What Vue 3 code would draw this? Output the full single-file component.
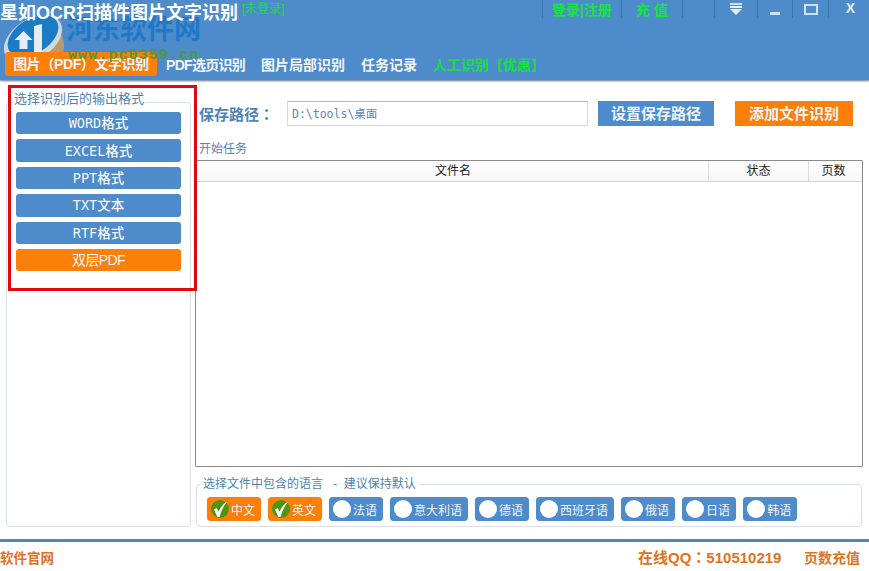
<template>
  <div class="app">
    <header class="top">
      <div class="title-row">
        <div class="title">星如OCR扫描件图片文字识别</div>
        <div class="no-login">[未登录]</div>
        <div class="ctrls">
          <div class="ctrl c-login">登录|注册</div>
          <div class="ctrl c-pay">充 值</div>
          <div class="ctrl c-blank"></div>
          <div class="ctrl c-skin">
            <svg width="14" height="14" viewBox="0 0 14 14">
              <rect x="1" y="1" width="12" height="2" fill="#cfe0f2" />
              <rect x="1" y="4" width="12" height="2" fill="#e6eef8" />
              <path d="M1 7h12l-6 6z" fill="#e6eef8" />
            </svg>
          </div>
          <div class="ctrl c-min">
            <svg width="12" height="14" viewBox="0 0 12 14"><rect x="1" y="10" width="10" height="3" fill="#cfe0f2" /></svg>
          </div>
          <div class="ctrl c-max">
            <svg width="14" height="14" viewBox="0 0 14 14"><rect x="1" y="3" width="12" height="9" fill="none" stroke="#cfe0f2" stroke-width="2" /></svg>
          </div>
          <div class="ctrl c-close">X</div>
        </div>
      </div>
      <nav class="nav">
        <div class="nav-item active">图片（PDF）文字识别</div>
        <div class="nav-item tight">PDF选页识别</div>
        <div class="nav-item">图片局部识别</div>
        <div class="nav-item">任务记录</div>
        <div class="nav-item green">人工识别【优惠】</div>
      </nav>

      <!-- site watermark over the header -->
      <svg class="wm-logo" width="70" height="70" viewBox="0 0 70 70">
        <ellipse cx="40" cy="36" rx="24" ry="25" fill="#e9a04a" opacity="0.7" />
        <ellipse cx="33" cy="29" rx="32" ry="20" transform="rotate(-32 33 29)" fill="#d5e0ea" opacity="0.9" />
        <ellipse cx="33" cy="26" rx="28" ry="17" transform="rotate(-32 33 26)" fill="#1c7bc5" />
        <path d="M23.5 21l9 9h-5v9h-8v-9h-5z" fill="#e4edf5" />
        <path d="M34 16l8-2v31l-8 4z" fill="#e4edf5" />
      </svg>
      <div class="wm-name">河东软件网</div>
      <div class="wm-url">www.pc0359.cn</div>
    </header>

    <main class="body">
      <aside class="side">
        <fieldset class="box format-box">
          <legend>选择识别后的输出格式</legend>
          <button v-for="f in formats" :key="f.name" class="fmt" :class="{ on: f.on }">{{ f.name }}</button>
        </fieldset>
      </aside>

      <section class="work">
        <div class="path-row">
          <label class="path-label">保存路径<span class="mid-colon">：</span></label>
          <div class="path-input">D:\tools\桌面</div>
          <button class="btn blue">设置保存路径</button>
          <button class="btn orange">添加文件识别</button>
        </div>
        <div class="start">开始任务</div>
        <div class="grid">
          <div class="grid-head">
            <div class="col col-name">文件名</div>
            <div class="col col-state">状态</div>
            <div class="col col-pages">页数</div>
          </div>
        </div>
        <fieldset class="box lang-box">
          <legend>选择文件中包含的语言 &nbsp;&nbsp;- &nbsp;建议保持默认</legend>
          <div class="langs">
            <div v-for="l in langs" :key="l.name" class="lang" :class="{ on: l.on }">
              <span class="dot">
                <svg v-if="l.on" width="16" height="17" viewBox="0 0 16 17">
                  <path d="M2 8.5l2.6-1.4 2 3.4C8.5 6.5 11 3 15 .8 11.5 5 9 10 7.6 16H5.4z" fill="#fff" />
                </svg>
              </span>
              <span>{{ l.name }}</span>
            </div>
          </div>
        </fieldset>
      </section>
    </main>

    <footer class="foot">
      <div class="site">软件官网</div>
      <div class="qq">在线QQ<span class="mid-colon">：</span>510510219</div>
      <div class="pay">页数充值</div>
    </footer>

    <!-- red annotation frame -->
    <div class="mark"></div>
  </div>
</template>

<script setup>
const formats = [
  { name: 'WORD格式' },
  { name: 'EXCEL格式' },
  { name: 'PPT格式' },
  { name: 'TXT文本' },
  { name: 'RTF格式' },
  { name: '双层PDF', on: true }
]

const langs = [
  { name: '中文', on: true },
  { name: '英文', on: true },
  { name: '法语' },
  { name: '意大利语' },
  { name: '德语' },
  { name: '西班牙语' },
  { name: '俄语' },
  { name: '日语' },
  { name: '韩语' }
]
</script>

<style>
html, body {
  margin: 0;
  background: #fff;
}
</style>

<style scoped>
.app {
  position: relative;
  width: 869px;
  height: 571px;
  overflow: hidden;
  display: flex;
  flex-direction: column;
  background: #fff;
  font-family: "Liberation Sans", "Noto Sans CJK SC", sans-serif;
}

.top {
  position: relative;
  height: 80px;
  flex: none;
  background: #4e8bca;
  box-shadow: 0 1px 2px #5b7390;
}

.title-row {
  display: flex;
  height: 44px;
}

.title {
  position: relative;
  z-index: 1;
  font-size: 18px;
  font-weight: 700;
  color: #fff;
  line-height: 27px;
  white-space: nowrap;
  width: 242px;
  flex: none;
}

.no-login {
  font-size: 12px;
  color: #10e040;
  line-height: 19px;
}

.ctrls {
  position: absolute;
  top: 0;
  left: 542px;
  display: flex;
  height: 18px;
}

.ctrl {
  box-sizing: border-box;
  height: 18px;
  border-left: 1px solid #3f74ab;
  display: flex;
  justify-content: center;
  align-items: center;
  font-weight: 700;
  font-size: 14px;
  color: #12e83c;
}

.c-login { width: 79px; }
.c-pay { width: 61px; }
.c-blank { width: 32px; }
.c-skin { width: 43px; }
.c-min { width: 35px; }
.c-max { width: 36px; }
.c-close { width: 41px; color: #e8f0f8; padding: 0 0 2px 3px; }

.nav {
  position: relative;
  z-index: 1;
  display: flex;
  align-items: center;
  height: 24px;
  margin-top: 8px;
  padding-left: 5px;
}

.nav-item {
  font-size: 14px;
  font-weight: 700;
  color: #f0f5fb;
  white-space: nowrap;
  margin-right: 16px;
  padding-bottom: 1px;
}

.nav-item.tight {
  letter-spacing: -0.7px;
}

.nav-item.active {
  box-sizing: border-box;
  background: #fb7f08;
  border-radius: 3px;
  height: 24px;
  line-height: 24px;
  width: 152px;
  text-align: center;
  letter-spacing: -0.4px;
  margin-right: 9px;
}

.nav-item.green {
  color: #14e23c;
}

.wm-logo {
  position: absolute;
  left: 0;
  top: 10px;
}

.wm-name {
  position: absolute;
  left: 66px;
  top: 15px;
  font-size: 27px;
  font-weight: 700;
  line-height: 30px;
  color: #1a78c8;
  opacity: 0.9;
  white-space: nowrap;
}

.wm-url {
  position: absolute;
  z-index: 2;
  left: 68px;
  top: 47px;
  font-size: 15px;
  font-weight: 700;
  letter-spacing: 1.1px;
  line-height: 18px;
  color: #4a9a30;
  opacity: 0.9;
  white-space: nowrap;
  font-family: "Liberation Mono", monospace;
}

.body {
  flex: none;
  height: 459px;
  display: flex;
}

.box {
  box-sizing: border-box;
  margin: 0;
  border: 1px solid #d9dfe5;
  border-radius: 4px;
  background: #fff;
}

.box legend {
  font-size: 12px;
  color: #4f7fb3;
  padding: 0 1px;
  line-height: 14px;
  white-space: nowrap;
}

.side {
  width: 196px;
  flex: none;
  padding: 12px 0 0 6px;
  box-sizing: border-box;
}

.format-box {
  width: 185px;
  height: 435px;
  padding: 0 8px 0 9px;
  display: flex;
  flex-direction: column;
}

.box.format-box legend {
  font-size: 13px;
  margin-left: -3px;
  padding-bottom: 6px;
}

.fmt {
  display: block;
  width: 165px;
  height: 22.4px;
  padding: 0 0 2px;
  border: none;
  border-radius: 3px;
  margin-bottom: 5px;
  background: #4e8bca;
  color: #f2f6fb;
  font-family: "DejaVu Sans Mono", "Noto Sans CJK SC", monospace;
  font-size: 13.5px;
  font-weight: 500;
}

.fmt.on {
  background: #fb7f08;
  font-weight: 400;
  font-family: "Liberation Sans", "Noto Sans CJK SC", sans-serif;
  font-size: 14px;
  letter-spacing: -0.6px;
}

.work {
  flex: 1;
  min-width: 0;
  padding: 21px 6px 0 0;
  display: flex;
  flex-direction: column;
}

.path-row {
  display: flex;
  align-items: center;
  height: 25px;
  padding-left: 3px;
}

.path-label {
  width: 88px;
  flex: none;
  font-size: 15px;
  font-weight: 700;
  color: #4e82b9;
  white-space: nowrap;
}

.mid-colon {
  font-family: "Noto Sans CJK TC", sans-serif;
}

.path-input {
  box-sizing: border-box;
  width: 301px;
  height: 25px;
  border: 1px solid #d8d8d8;
  border-top-color: #b5b5b5;
  padding-left: 4px;
  line-height: 25px;
  font-family: "DejaVu Sans Mono", "Noto Sans CJK SC", monospace;
  font-size: 11.5px;
  color: #5b88b8;
  white-space: nowrap;
}

.btn {
  height: 25px;
  padding: 0 0 2px;
  border: none;
  color: #eef4fa;
  font-family: "Liberation Sans", "Noto Sans CJK SC", sans-serif;
  font-size: 15px;
  font-weight: 700;
}

.btn.blue {
  width: 116px;
  margin-left: 10px;
  background: #4e8bca;
}

.btn.orange {
  width: 118px;
  margin-left: 21px;
  background: #fb7f08;
}

.start {
  margin: 15px 0 0 3px;
  font-size: 12px;
  line-height: 16px;
  color: #5383b6;
  height: 18px;
}

.grid {
  box-sizing: border-box;
  width: 668px;
  margin-left: -1px;
  margin-top: 1px;
  height: 307px;
  border: 1px solid #8a8a8a;
  border-radius: 1px;
}

.grid-head {
  display: flex;
  height: 20px;
  padding-right: 3px;
  border-bottom: 1px solid #d6d6d6;
  background: linear-gradient(#fff, #f6f6f6);
}

.col {
  box-sizing: border-box;
  font-size: 12px;
  line-height: 20px;
  text-align: center;
  color: #1c1c1c;
}

.col-name { width: 512px; padding-left: 2px; }
.col-state { width: 100px; border-left: 1px solid #dcdcdc; }
.col-pages { width: 50px; border-left: 1px solid #dcdcdc; }

.lang-box {
  width: 666px;
  height: 50px;
  margin-top: 10px;
  padding: 0 0 0 10px;
}

.box.lang-box legend {
  margin-left: -4px;
  padding: 0 3px 0 0;
}

.langs {
  display: flex;
  gap: 7px;
  margin-top: 6px;
}

.lang {
  box-sizing: border-box;
  height: 24px;
  padding: 0 6px 0 4px;
  display: flex;
  align-items: center;
  gap: 2px;
  border-radius: 4px;
  background: #4e8bca;
  box-shadow: 0 0 1px #a9c4e0;
  color: #eef4fa;
  font-size: 12px;
  white-space: nowrap;
}

.lang.on {
  background: #fb7f08;
  box-shadow: 0 0 1px #f9c28a;
}

.dot {
  width: 18px;
  height: 18px;
  flex: none;
  border-radius: 50%;
  background: #fff;
  display: flex;
  align-items: center;
  justify-content: center;
}

.lang.on .dot {
  background: #4f960f;
}

.foot {
  flex: none;
  height: 29px;
  border-top: 3px solid #4e86c0;
  display: flex;
  align-items: center;
  font-size: 14px;
  font-weight: 700;
  color: #e2721c;
  white-space: nowrap;
}

.site {
  width: 638px;
  flex: none;
  font-size: 13.5px;
}

.qq {
  width: 166px;
  flex: none;
  font-size: 15px;
}

.mark {
  position: absolute;
  left: 8px;
  top: 85px;
  width: 189px;
  height: 206px;
  box-sizing: border-box;
  border: 3px solid #e00a0a;
}
</style>
